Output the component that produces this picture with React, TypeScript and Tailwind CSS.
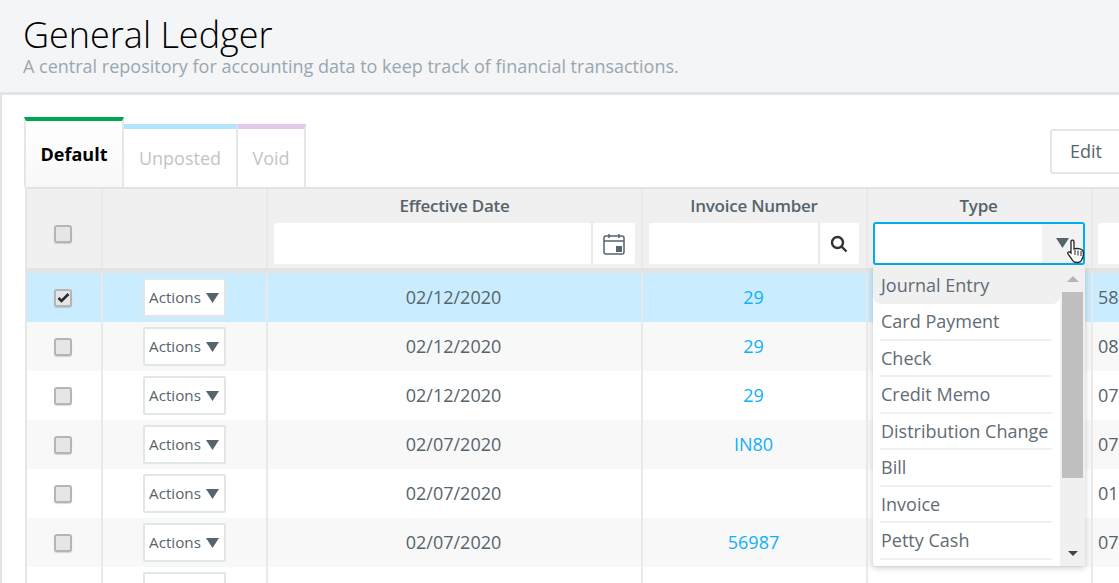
import React from 'react';

const rows = [
  { date: '02/12/2020', invoice: '29', last: '58', checked: true },
  { date: '02/12/2020', invoice: '29', last: '08' },
  { date: '02/12/2020', invoice: '29', last: '07' },
  { date: '02/07/2020', invoice: 'IN80', last: '07' },
  { date: '02/07/2020', invoice: '', last: '01' },
  { date: '02/07/2020', invoice: '56987', last: '07' },
  { date: '', invoice: '', last: '' },
];

const types = ['Card Payment', 'Check', 'Credit Memo', 'Distribution Change', 'Bill', 'Invoice', 'Petty Cash'];

const Caret = ({ className = '' }: { className?: string }) => (
  <svg width="13" height="10" viewBox="0 0 13 10" className={className}>
    <path d="M0 0h13L6.5 10z" fill="#56646c" />
  </svg>
);

const Checkbox = ({ checked }: { checked?: boolean }) => (
  <div className="w-[18px] h-[18px] rounded-[3px] border-2 border-[#b5b5b5] bg-[#e6e6e6] shadow-[0_1px_1px_rgba(0,0,0,0.15)] flex items-center justify-center">
    {checked && (
      <svg width="13" height="11" viewBox="0 0 13 11">
        <path d="M1.500 6l3 3L11.500 2" fill="none" stroke="#2b2b2b" strokeWidth="2.6" />
      </svg>
    )}
  </div>
);

const Row = ({ row, index }: { row: (typeof rows)[number]; index: number }) => {
  const bg = row.checked ? 'bg-[#c9edff]' : index % 2 === 1 ? 'bg-[#f8f8f8]' : 'bg-white';
  return (
    <div className={`flex h-[49px] shrink-0 text-[18px] text-[#56646c] ${bg}`}>
      <div className="w-[76px] shrink-0 border-r-2 border-[#e9e9e9] flex items-center justify-center pr-[2px]">
        {row.date && <Checkbox checked={row.checked} />}
      </div>
      <div className="w-[165px] shrink-0 border-r-2 border-[#e9e9e9] flex items-center justify-center pr-[1px]">
        <button className="w-[83px] h-[39px] bg-white border-2 border-[#dfe7e7] rounded-[2px] text-[15.2px] flex items-center justify-center gap-[5px]">
          {row.date && 'Actions'}
          {row.date && <Caret />}
        </button>
      </div>
      <div className="w-[375px] shrink-0 border-r-2 border-[#e9e9e9] flex items-center justify-center pr-[2px]">{row.date}</div>
      <div className="w-[225px] shrink-0 border-r-2 border-[#e9e9e9] flex items-center justify-center pr-[2px] text-[#0fb0fa]">{row.invoice}</div>
      <div className="w-[225px] shrink-0 border-r-2 border-[#e9e9e9]" />
      <div className="flex-1 pl-[5px] flex items-center whitespace-nowrap">{row.last}</div>
    </div>
  );
};

export default function App() {
  return (
    <div className="w-[1119px] h-[583px] overflow-hidden relative bg-white font-['Open_Sans',sans-serif]">
      <header className="h-[95px] bg-[#f3f5f7] border-b-[3px] border-[#dfe6e6] pl-[23px] pt-[15px]">
        <h1 className="text-[36px] leading-[40px] font-light text-black">General Ledger</h1>
        <p className="text-[18px] leading-[22px] text-[#9aa7b0]">A central repository for accounting data to keep track of financial transactions.</p>
      </header>
      <main className="h-[488px] border-l-2 border-[#dfe6e6] pl-[22px] pt-[22px] overflow-hidden">
        <div className="flex items-end h-[70px] relative">
          <div className="w-[100px] h-[70px] border-t-4 border-[#00a651] border-x-2 border-x-[#e6e6e6] bg-gradient-to-b from-white to-[#f8f8f8] flex items-center justify-center text-[18px] font-bold text-black">Default</div>
          <div className="w-[114px] h-[63px] border-t-[5px] border-[#b3e5fc] border-r-2 border-r-[#e6e6e6] flex items-center justify-center text-[18px] text-[#c4c4c4] pt-[1px]">Unposted</div>
          <div className="w-[68px] h-[63px] border-t-[5px] border-[#e3c8e9] border-r-2 border-r-[#e6e6e6] flex items-center justify-center text-[18px] text-[#c4c4c4] pt-[1px]">Void</div>
          <button className="absolute left-[1026px] top-[12px] w-[100px] h-[45px] border-2 border-[#dfe7e7] rounded-[3px] bg-white text-[18px] text-[#56646c] text-left pl-[18px]">Edit</button>
        </div>
        <div className="border-l-2 border-[#e6e6e6] ml-[1px] w-[1100px]">
          <div className="flex h-[86px] bg-[#f0f0f0] border-t-2 border-b-[5px] border-[#e3e3e3] text-[17px] tracking-[-0.25px] font-semibold text-[#56646c]">
            <div className="w-[76px] shrink-0 border-r-2 border-[#e9e9e9] flex justify-center pr-[2px] pt-[36px]"><Checkbox /></div>
            <div className="w-[165px] shrink-0 border-r-2 border-[#e9e9e9]" />
            <div className="w-[375px] shrink-0 border-r-2 border-[#e9e9e9] pl-[6px] pr-[6px] flex flex-col items-center">
              <div className="h-[34px] leading-[34px]">Effective Date</div>
              <div className="w-full h-[41px] flex bg-white rounded-[2px]">
                <div className="flex-1" />
                <div className="w-[44px] border-l-2 border-[#e9e9e9] flex items-center justify-center pr-[1px]">
                  <svg width="22" height="22" viewBox="0 0 22 22" fill="none">
                    <rect x="1" y="3" width="20" height="18" rx="2" stroke="#56646c" strokeWidth="1.500" />
                    <path d="M1 8h20M6 1v4M16 1v4" stroke="#56646c" strokeWidth="1.500" />
                    <rect x="13" y="13" width="6" height="6" fill="#56646c" />
                  </svg>
                </div>
              </div>
            </div>
            <div className="w-[225px] shrink-0 border-r-2 border-[#e9e9e9] pl-[6px] pr-[7px] flex flex-col items-center">
              <div className="h-[34px] leading-[34px]">Invoice Number</div>
              <div className="w-full h-[41px] flex bg-white rounded-[2px]">
                <div className="flex-1" />
                <div className="w-[41px] border-l-2 border-[#e9e9e9] flex items-center justify-center pr-[2px]">
                  <svg width="18" height="18" viewBox="0 0 18 18" fill="none" stroke="#333" strokeWidth="2.400">
                    <circle cx="7.500" cy="7.500" r="5.500" />
                    <path d="M11.500 11.500L16.500 16.500" />
                  </svg>
                </div>
              </div>
            </div>
            <div className="w-[225px] shrink-0 border-r-2 border-[#e9e9e9] pl-[5px] pr-[6px] flex flex-col items-center">
              <div className="h-[33px] leading-[34px] pr-[1px]">Type</div>
              <div className="w-full h-[43px] flex bg-white rounded-[3px] border-2 border-[#00aeef]">
                <div className="flex-1" />
                <div className="w-[41px] bg-[#f2f2f2] flex items-center justify-center pb-[1px]"><Caret /></div>
              </div>
            </div>
            <div className="flex-1 px-[5px] pt-[34px]"><div className="h-[41px] bg-white rounded-[2px]" /></div>
          </div>
          {rows.map((row, index) => (
            <Row key={index} row={row} index={index} />
          ))}
        </div>
      </main>

      {/* open Type dropdown */}
      <div className="absolute left-[873px] top-[265px] w-[212px] h-[301px] bg-white shadow-[0_2px_6px_rgba(0,0,0,0.2)] flex text-[18px] text-[#5f6c74] rounded-b-[3px]">
        <ul className="w-[187px] shrink-0">
          <li className="h-[39px] bg-[#f0f0f0] rounded-b-[8px] pl-[8px] pt-[7px] leading-[26px]">Journal Entry</li>
          {types.map((type) => (
            <li key={type} className="pl-[8px] h-[36.5px]">
              <div className="w-[172px] -ml-[1px] pl-[1px] h-full border-b-2 border-[#f0f0f0] leading-[34px] whitespace-nowrap">{type}</div>
            </li>
          ))}
        </ul>
        <div className="w-[25px] bg-[#f0f0f0] flex flex-col items-center">
          <div className="h-[27px] flex items-center justify-center">
            <div className="w-0 h-0 border-x-[6px] border-x-transparent border-b-[6px] border-b-[#b4b4b4]" />
          </div>
          <div className="w-[21px] h-[186px] bg-[#bfbfbf]" />
          <div className="mt-auto h-[26px] flex items-center justify-center">
            <div className="w-0 h-0 border-x-[5px] border-x-transparent border-t-[5px] border-t-[#444]" />
          </div>
        </div>
      </div>

      {/* mouse pointer */}
      <svg className="absolute left-[1066px] top-[239px]" width="20" height="26" viewBox="0 0 20 26">
        <path d="M5 2c1-1.500 3-1 3 1v7c2-1 8-.5 9 2 1 3 0 7-2 10-1 2-7 2-8 0-1-1.500-4-6-5-7-1-2 1-3 3-1z" fill="#fff" stroke="#222" strokeWidth="1.300" />
        <path d="M9 11v5M12 11.500v5M15 12v5" stroke="#222" strokeWidth="1" />
      </svg>
    </div>
  );
}
